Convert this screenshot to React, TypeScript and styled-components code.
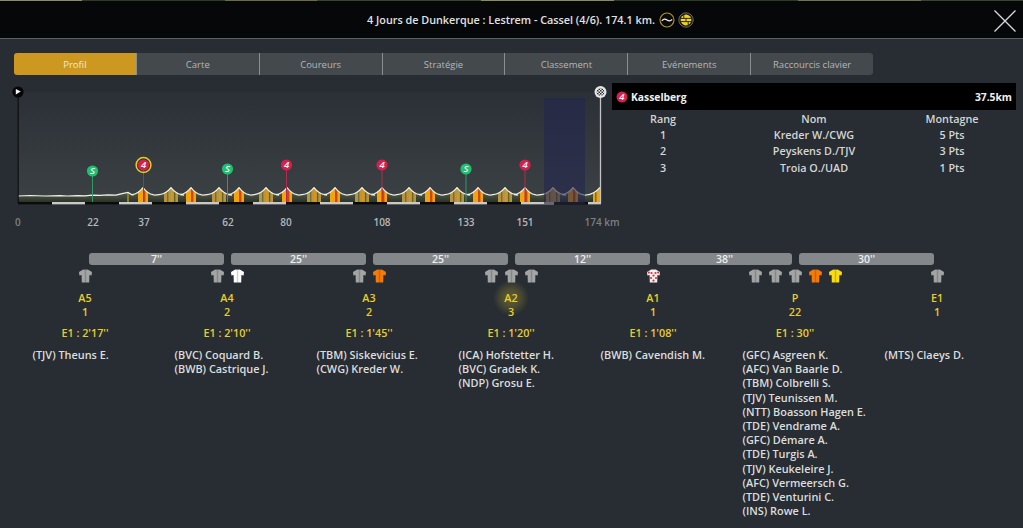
import React from "react";
import styled, { createGlobalStyle } from "styled-components";

const Global = createGlobalStyle`
  html, body { margin: 0; padding: 0; background: #272d33; }
  body { font-family: "Open Sans", "Noto Sans", sans-serif; overflow: hidden; }
  #root { width: 1023px; height: 528px; overflow: hidden; }
`;

const Page = styled.div`
  width: 1023px;
  height: 528px;
  background: #272d33;
  display: flex;
  flex-direction: column;
`;
const Strip = styled.div`
  height: 1px;
  background: linear-gradient(90deg, #8f8a6c 0 8%, #2d3a24 8% 22%, #6c6a4c 22% 31%, #39452c 31% 47%, #8a8a66 47% 60%, #2d3a24 60% 78%, #6f7356 78% 90%, #3a4530 90%);
`;
const Header = styled.header`
  height: 37px;
  background: #060709;
  border-bottom: 1px solid #5b6066;
  display: flex;
  align-items: center;
  justify-content: center;
  gap: 3px;
  padding-left: 38px;
  position: relative;
  flex: none;
`;
const Title = styled.h1`
  margin: 0 1px 0 0;
  font-size: 10.8px;
  font-weight: 600;
  color: #e2e2e2;
  white-space: nowrap;
`;
const CloseIcon = styled.svg`
  position: absolute;
  right: 6px;
  top: 8px;
`;
const Tabs = styled.nav`
  display: flex;
  margin: 14px 0 0 14px;
  width: 859px;
  height: 22px;
  flex: none;
`;
const Tab = styled.div<{ $active?: boolean }>`
  flex: 1 1 0;
  box-sizing: border-box;
  display: flex;
  align-items: center;
  justify-content: center;
  font-size: 9.5px;
  color: ${(p) => (p.$active ? "#f6e9c8" : "#b4b7b9")};
  background: ${(p) => (p.$active ? "#cc981f" : "#43494d")};
  border-right: 1px solid #8b8f92;
  &:first-child { border-radius: 3px 0 0 3px; }
  &:last-child { border-radius: 0 3px 3px 0; border-right: none; }
`;
const TopRow = styled.section`
  display: flex;
  margin: 8px 0 0 10px;
  height: 150px;
  flex: none;
`;
const ChartSvg = styled.svg`
  width: 602px;
  height: 150px;
  overflow: visible;
  flex: none;
`;
const ScaleLabel = styled.text<{ $dim?: boolean }>`
  font-size: 10px;
  font-weight: 600;
  fill: ${(p) => (p.$dim ? "#7c8083" : "#b6b8ba")};
  font-family: "Open Sans", sans-serif;
`;
const PinText = styled.text`
  font-size: 9.5px;
  font-style: italic;
  font-weight: 600;
  fill: #f4f4f4;
  text-anchor: middle;
  font-family: "Open Sans", sans-serif;
`;
const Side = styled.aside`
  width: 404px;
  flex: none;
`;
const SideHead = styled.div`
  height: 27px;
  background: #000;
  display: flex;
  align-items: center;
  gap: 3px;
  padding: 0 4px 0 4px;
  color: #f0f0f0;
  font-size: 10.3px;
  font-weight: 700;
`;
const SideName = styled.span`
  flex: 1;
`;
const Row = styled.div`
  display: grid;
  grid-template-columns: 102px 200px 76px;
  height: 16.4px;
  align-items: center;
  text-align: center;
  font-size: 10.8px;
  font-weight: 600;
  color: #d4d5d6;
  &:first-of-type { margin-top: 1.6px; }
`;
const Bars = styled.div`
  display: flex;
  gap: 7px;
  margin: 20px 0 0 89px;
  flex: none;
`;
const Bar = styled.div`
  width: 135px;
  height: 12px;
  border-radius: 3px;
  background: #85888a;
  color: #eeeeee;
  font-size: 10.5px;
  font-weight: 600;
  line-height: 12px;
  text-align: center;
`;
const Groups = styled.div`
  display: flex;
  margin: 4px 0 0 14px;
`;
const Group = styled.div`
  width: 142px;
  flex: none;
  display: flex;
  flex-direction: column;
`;
const Jerseys = styled.div`
  display: flex;
  justify-content: center;
  gap: 7px;
  height: 14px;
`;
const Yellow = styled.div`
  color: #e8cd2c;
  font-size: 10.8px;
  font-weight: 600;
  text-align: center;
  line-height: 14px;
`;
const GroupLabel = styled(Yellow)`
  margin-top: 8px;
`;
const Glow = styled.span<{ $on?: boolean }>`
  position: relative;
  display: inline-block;
  &::before {
    content: "";
    display: ${(p) => (p.$on ? "block" : "none")};
    position: absolute;
    left: 50%;
    top: 50%;
    width: 36px;
    height: 36px;
    transform: translate(-50%, -50%);
    background: radial-gradient(circle, rgba(232,205,44,.3) 0, rgba(232,205,44,.2) 35%, rgba(232,205,44,0) 70%);
  }
`;
const GroupTime = styled(Yellow)`
  margin-top: 7px;
  height: 14px;
`;
const Names = styled.ul`
  list-style: none;
  margin: 8px 0 0;
  padding: 0 0 0 18.5px;
`;
const Name = styled.li`
  font-size: 10.9px;
  font-weight: 600;
  line-height: 14.2px;
  color: #dcddde;
  white-space: nowrap;
`;

function Badge() {
  return (
    <svg width="12" height="12" viewBox="0 0 12 12">
      <circle cx="6" cy="6" r="5.5" fill="#d3204c" />
      <PinText x="5.8" y="9.3">4</PinText>
    </svg>
  );
}

function Jersey({ color, dots }: { color: string; dots?: boolean }) {
  return (
    <svg width="13" height="14" viewBox="0 0 13 14">
      <path d="M4.2 .4 L8.8 .4 L13 3 L12.6 6.6 L10.4 6 L10.2 13.6 L2.8 13.6 L2.6 6 L.4 6.6 L0 3 Z" fill={color} />
      {!dots && <path d="M6.5 2 V13.6" stroke="#000" strokeOpacity=".18" strokeWidth="1.4" />}
      {!dots && <path d="M4.2 .4 Q6.5 2.4 8.8 .4" fill="#000" fillOpacity=".25" />}
      {dots &&
        [[4.5, 4], [8.5, 4], [6.5, 6.6], [4, 9], [9, 9], [6.5, 11.6], [1.8, 3.6], [11.2, 3.6]].map(([x, y], i) => (
          <circle key={i} cx={x} cy={y} r="1.1" fill="#d4343c" />
        ))}
    </svg>
  );
}

const PEAKS = [143, 171, 191, 219, 239, 266, 287, 314, 335, 362, 382, 409, 430, 457, 478, 505, 525, 553, 573];

function terrainLine() {
  let d =
    "M18 196 L30 195.5 L45 196 L60 195.6 L67 196 L78 195.6 L85 195.8 L92 195.2 L100 195.4 L108 194.8 L116 195.2 L122 193.6 L128 192.4 L132 194.8 L134 194.6";
  PEAKS.forEach((p, i) => {
    const base = i % 2 === 0 ? 10 : 11;
    d += ` L${p - base - 1} 194.6 Q${p - 5} 194 ${p} 187.6 Q${p + 5} 194 ${p + base} 194.6 L${p + base + 2} 195.2`;
  });
  d += " L586 195 Q594 194.6 600 187.4";
  return d;
}

function Terrain() {
  const line = terrainLine();
  const area = `${line} L600 202 L18 202 Z`;
  return (
    <g>
      <defs>
        <clipPath id="terrain"><path d={area} /></clipPath>
        <linearGradient id="ground" x1="0" x2="0" y1="190" y2="202" gradientUnits="userSpaceOnUse">
          <stop offset="0" stopColor="#5a6650" />
          <stop offset="1" stopColor="#2c3329" />
        </linearGradient>
      </defs>
      <g clipPath="url(#terrain)">
        <rect x="18" y="186" width="582" height="16" fill="url(#ground)" />
        <rect x="127" y="190" width="2" height="12" fill="#8d7d22" />
        {PEAKS.map((p, i) =>
          i % 2 === 0 ? (
            <g key={p}>
              <rect x={p - 5} y="186" width="10" height="16" fill="#f2a30e" />
              <rect x={p} y="186" width="2.4" height="16" fill="#c9471a" />
            </g>
          ) : (
            <g key={p}>
              <rect x={p - 7} y="186" width="14" height="16" fill="#b89440" />
              <rect x={p - 4} y="186" width="1.4" height="16" fill="#6d7038" />
              <rect x={p} y="186" width="1.5" height="16" fill="#e0950e" />
              <rect x={p + 3} y="186" width="1.4" height="16" fill="#5f6533" />
            </g>
          )
        )}
        <rect x="593" y="186" width="7" height="16" fill="#eaa312" />
        <rect x="595" y="186" width="1.5" height="16" fill="#6d7038" />
      </g>
      <path d={line} fill="none" stroke="#eef0ea" strokeWidth="1.2" />
    </g>
  );
}

function Pin({ x, y, label, green, ring }: { x: number; y: number; label: string; green?: boolean; ring?: boolean }) {
  const c = green ? "#1fc070" : "#d3204c";
  return (
    <g>
      <line x1={x} x2={x} y1={y} y2="202" stroke={green ? "#2f9a68" : "#b52a4c"} strokeWidth="1" />
      {ring && <circle cx={x} cy={y} r="7.4" fill="none" stroke="#e8cb1c" strokeWidth="1.5" />}
      <circle cx={x} cy={y} r="5.6" fill={c} />
      <PinText x={x} y={y + 3.4}>{label}</PinText>
    </g>
  );
}

const STRIPES = [52, 119, 186, 253, 320, 387, 454, 521];

function Profile() {
  const marks: [number, string][] = [[93, "22"], [144, "37"], [228, "62"], [286, "80"], [382, "108"], [466, "133"], [525, "151"]];
  return (
    <ChartSvg viewBox="10 83 602 150">
      <defs>
        <linearGradient id="sky" x1="0" x2="0" y1="0" y2="1">
          <stop offset="0" stopColor="#2a3036" />
          <stop offset="1" stopColor="#3c4144" />
        </linearGradient>
        <pattern id="check" width="3" height="3" patternUnits="userSpaceOnUse">
          <rect width="3" height="3" fill="#e6e6e6" />
          <rect width="1.5" height="1.5" fill="#333" />
          <rect x="1.5" y="1.5" width="1.5" height="1.5" fill="#333" />
        </pattern>
      </defs>
      <rect x="18" y="92" width="582" height="110" fill="url(#sky)" />
      <Terrain />
      <rect x="18" y="202" width="583" height="2.4" fill="#0a0b0b" />
      {STRIPES.map((x) => (
        <rect key={x} x={x} y="202" width="33" height="2.4" fill="#c8c9c8" />
      ))}
      <rect x="588" y="202" width="13" height="2.4" fill="#c8c9c8" />
      <Pin x={92.5} y={171} label="S" green />
      <Pin x={143.5} y={165} label="4" ring />
      <Pin x={227.5} y={169} label="S" green />
      <Pin x={286.5} y={165} label="4" />
      <Pin x={382} y={165} label="4" />
      <Pin x={466} y={169} label="S" green />
      <Pin x={525} y={165} label="4" />
      <rect x="544" y="98" width="41" height="106" fill="#25264f" fillOpacity=".6" />
      <line x1="18.2" x2="18.2" y1="92" y2="203" stroke="#08090a" strokeWidth="1" />
      <circle cx="18" cy="92" r="5.6" fill="#050505" />
      <path d="M15.8 89 L20.8 91.6 L15.8 94.4 Z" fill="#f4f4f4" />
      <line x1="600.5" x2="600.5" y1="92" y2="203" stroke="#c2c4c5" strokeWidth="1.3" />
      <circle cx="600.5" cy="92" r="6" fill="#e6e6e6" />
      <circle cx="600.5" cy="92" r="3.8" fill="url(#check)" />
      <ScaleLabel x="15" y="225.5" $dim>0</ScaleLabel>
      {marks.map(([x, t]) => (
        <ScaleLabel key={t} x={x} y="225.5" textAnchor="middle">{t}</ScaleLabel>
      ))}
      <ScaleLabel x="584.5" y="225.5" $dim>174 km</ScaleLabel>
    </ChartSvg>
  );
}

const TABS = ["Profil", "Carte", "Coureurs", "Stratégie", "Classement", "Evénements", "Raccourcis clavier"];
const GAPS = ["7''", "25''", "25''", "12''", "38''", "30''"];
const G = "#a3a5a5";
const GROUPS = [
  { label: "A5", n: "1", time: "E1 : 2'17''", jerseys: [G], names: ["(TJV) Theuns E."] },
  { label: "A4", n: "2", time: "E1 : 2'10''", jerseys: [G, "#ffffff"], names: ["(BVC) Coquard B.", "(BWB) Castrique J."] },
  { label: "A3", n: "2", time: "E1 : 1'45''", jerseys: [G, "#f57a08"], names: ["(TBM) Siskevicius E.", "(CWG) Kreder W."] },
  { label: "A2", n: "3", time: "E1 : 1'20''", glow: true, jerseys: [G, G, G], names: ["(ICA) Hofstetter H.", "(BVC) Gradek K.", "(NDP) Grosu E."] },
  { label: "A1", n: "1", time: "E1 : 1'08''", jerseys: ["dots"], names: ["(BWB) Cavendish M."] },
  {
    label: "P", n: "22", time: "E1 : 30''", jerseys: [G, G, G, "#f57a08", "#f8dc14"],
    names: ["(GFC) Asgreen K.", "(AFC) Van Baarle D.", "(TBM) Colbrelli S.", "(TJV) Teunissen M.", "(NTT) Boasson Hagen E.", "(TDE) Vendrame A.", "(GFC) Démare A.", "(TDE) Turgis A.", "(TJV) Keukeleire J.", "(AFC) Vermeersch G.", "(TDE) Venturini C.", "(INS) Rowe L."],
  },
  { label: "E1", n: "1", time: "", jerseys: [G], names: ["(MTS) Claeys D."] },
];
const RANKS = [
  ["Rang", "Nom", "Montagne"],
  ["1", "Kreder W./CWG", "5 Pts"],
  ["2", "Peyskens D./TJV", "3 Pts"],
  ["3", "Troia O./UAD", "1 Pts"],
];

export default function App() {
  return (
    <Page>
      <Global />
      <Strip />
      <Header>
        <Title>4 Jours de Dunkerque : Lestrem - Cassel (4/6). 174.1 km.</Title>
        <svg width="16" height="16" viewBox="0 0 16 16">
          <circle cx="8" cy="8" r="7" fill="#0a0a0a" stroke="#b0962a" strokeWidth="1.1" />
          <path d="M2.8 9 Q5.2 5.8 8 8 T13.2 7.4" fill="none" stroke="#f0f0f0" strokeWidth="1.2" />
        </svg>
        <svg width="16" height="16" viewBox="0 0 16 16">
          <circle cx="8" cy="8" r="7.2" fill="#1a1a1a" stroke="#6a6a6a" strokeWidth="1" />
          <circle cx="8" cy="8" r="5.4" fill="#f1d21e" />
          <path d="M2.6 6.4 H13.4 M2.6 9.6 H13.4 M8 6.4 V9.6 M5.8 2.8 V6.4 M10.2 9.6 V13.2" stroke="#1a1a1a" strokeWidth=".9" />
        </svg>
        <CloseIcon width="24" height="24" viewBox="0 0 24 24">
          <path d="M1.5 1.5 L22.5 22.5 M22.5 1.5 L1.5 22.5" stroke="#d9dbdc" strokeWidth="1.3" />
        </CloseIcon>
      </Header>
      <Tabs>
        {TABS.map((t, i) => (
          <Tab key={t} $active={i === 0}>{t}</Tab>
        ))}
      </Tabs>
      <TopRow>
        <Profile />
        <Side>
          <SideHead>
            <Badge />
            <SideName>Kasselberg</SideName>
            <span>37.5km</span>
          </SideHead>
          {RANKS.map((r) => (
            <Row key={r[0]}>
              <span>{r[0]}</span>
              <span>{r[1]}</span>
              <span>{r[2]}</span>
            </Row>
          ))}
        </Side>
      </TopRow>
      <Bars>
        {GAPS.map((g, i) => (
          <Bar key={i}>{g}</Bar>
        ))}
      </Bars>
      <Groups>
        {GROUPS.map((g) => (
          <Group key={g.label}>
            <Jerseys>
              {g.jerseys.map((c, i) =>
                c === "dots" ? <Jersey key={i} color="#f4f0f0" dots /> : <Jersey key={i} color={c} />
              )}
            </Jerseys>
            <GroupLabel>
              <Glow $on={g.glow}>{g.label}</Glow>
            </GroupLabel>
            <Yellow>{g.n}</Yellow>
            <GroupTime>{g.time}</GroupTime>
            <Names>
              {g.names.map((n) => (
                <Name key={n}>{n}</Name>
              ))}
            </Names>
          </Group>
        ))}
      </Groups>
    </Page>
  );
}
